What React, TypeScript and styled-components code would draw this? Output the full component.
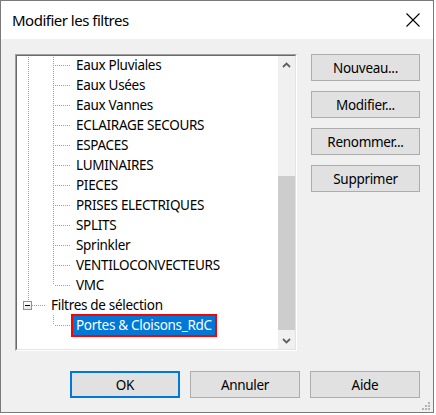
import React from "react";
import styled, { createGlobalStyle, css } from "styled-components";

const Global = createGlobalStyle`
  html, body { margin: 0; padding: 0; background: #ffffff; }
  body { font-family: "Noto Sans", "Liberation Sans", sans-serif; }
  * { box-sizing: border-box; }
`;

const FONT = `"Noto Sans", "Liberation Sans", sans-serif`;

const Window = styled.div`
  width: 434px;
  border: 1px solid #7a7a7a;
  background: #f0f0f0;
  position: relative;
  display: flex;
  flex-direction: column;
`;

const TitleBar = styled.div`
  height: 38px;
  background: #ffffff;
  display: flex;
  align-items: center;
  justify-content: space-between;
  padding: 0 10px 0 11px;
`;

const Title = styled.span`
  font-family: ${FONT};
  font-size: 15px;
  letter-spacing: -0.5px;
  color: #000;
`;

const CloseBox = styled.div`
  width: 20px;
  height: 20px;
  display: flex;
  align-items: center;
  justify-content: center;
`;

const Body = styled.div`
  display: flex;
  flex-direction: column;
  padding: 15px 13px 14px 14px;
`;

const TopRow = styled.div`
  display: flex;
  gap: 14px;
  align-items: flex-start;
`;

const ListOuter = styled.div`
  width: 282px;
  height: 297px;
  border: 1px solid;
  border-color: #a0a0a0 #ffffff #ffffff #a0a0a0;
  display: flex;
`;

const ListInner = styled.div`
  flex: 1;
  display: flex;
  border: 1px solid;
  border-color: #696969 #e3e3e3 #e3e3e3 #696969;
  background: #ffffff;
  overflow: hidden;
`;

const Tree = styled.div`
  flex: 1;
  display: flex;
  flex-direction: column;
  overflow: hidden;
  margin-top: -1px;
`;

const Row = styled.div`
  height: 20px;
  display: flex;
  align-items: center;
  flex: none;
`;

type VLine = "full" | "top" | "none";

const dottedV = css`
  background-image: repeating-linear-gradient(to bottom, #a0a0a0 0 1px, transparent 1px 2px);
`;
const dottedH = css`
  background-image: repeating-linear-gradient(to right, #a0a0a0 0 1px, transparent 1px 2px);
`;

const Guide = styled.div<{ $w: number; $v: VLine; $h: boolean }>`
  position: relative;
  width: ${(p) => p.$w}px;
  align-self: stretch;
  flex: none;
  display: flex;
  align-items: center;
  padding-left: 6px;
  &::before {
    content: "";
    position: absolute;
    left: 11px;
    top: 0;
    width: 1px;
    height: ${(p) => (p.$v === "full" ? "100%" : p.$v === "top" ? "50%" : "0")};
    ${dottedV}
  }
  &::after {
    content: "";
    display: ${(p) => (p.$h ? "block" : "none")};
    position: absolute;
    left: 13px;
    right: 1px;
    top: 50%;
    height: 1px;
    ${dottedH}
  }
`;

const Expander = styled.span`
  position: relative;
  z-index: 1;
  width: 9px;
  height: 9px;
  border: 1px solid #919191;
  background: linear-gradient(#ffffff, #e6e6e6);
  display: flex;
  align-items: center;
  justify-content: center;
  margin-top: 1px;
  &::before {
    content: "";
    width: 5px;
    height: 1px;
    background: #000;
  }
`;

const Label = styled.span<{ $selected?: boolean }>`
  height: 23px;
  display: flex;
  align-items: center;
  padding: 0 3px;
  border: 2px solid transparent;
  white-space: nowrap;
  font-family: ${FONT};
  font-size: 13.5px;
  letter-spacing: -0.3px;
  color: #000;
  ${(p) =>
    p.$selected &&
    css`
      background: #0078d7;
      color: #ffffff;
      border-color: #ff0000;
    `}
`;

const ScrollBar = styled.div`
  width: 17px;
  flex: none;
  background: #f0f0f0;
  display: flex;
  flex-direction: column;
`;

const ArrowButton = styled.div`
  height: 17px;
  flex: none;
  display: flex;
  align-items: center;
  justify-content: center;
`;

const Track = styled.div`
  flex: 1;
  display: flex;
  flex-direction: column;
  padding-top: 103px;
  padding-bottom: 2px;
`;

const Thumb = styled.div`
  flex: 1;
  background: #cdcdcd;
`;

const SideButtons = styled.div`
  display: flex;
  flex-direction: column;
  gap: 10px;
`;

const Button = styled.button<{ $default?: boolean; $wide?: boolean }>`
  width: ${(p) => (p.$wide ? 110 : 109)}px;
  height: 27px;
  padding: 0;
  background: #e1e1e1;
  border: 1px solid #adadad;
  font-family: ${FONT};
  font-size: 13.5px;
  letter-spacing: -0.3px;
  color: #000;
  ${(p) =>
    p.$default &&
    css`
      border: 2px solid #0078d7;
    `}
`;

const BottomRow = styled.div`
  display: flex;
  justify-content: flex-end;
  gap: 10px;
  margin-top: 20px;
`;

const Grip = styled.svg`
  position: absolute;
  right: 2px;
  bottom: 1px;
`;

type Item = { label: string; level: 0 | 1; v0: VLine; v1?: VLine; expander?: boolean; selected?: boolean };

const items: Item[] = [
  { label: "Eaux Pluviales", level: 1, v0: "full", v1: "full" },
  { label: "Eaux Usées", level: 1, v0: "full", v1: "full" },
  { label: "Eaux Vannes", level: 1, v0: "full", v1: "full" },
  { label: "ECLAIRAGE SECOURS", level: 1, v0: "full", v1: "full" },
  { label: "ESPACES", level: 1, v0: "full", v1: "full" },
  { label: "LUMINAIRES", level: 1, v0: "full", v1: "full" },
  { label: "PIECES", level: 1, v0: "full", v1: "full" },
  { label: "PRISES ELECTRIQUES", level: 1, v0: "full", v1: "full" },
  { label: "SPLITS", level: 1, v0: "full", v1: "full" },
  { label: "Sprinkler", level: 1, v0: "full", v1: "full" },
  { label: "VENTILOCONVECTEURS", level: 1, v0: "full", v1: "full" },
  { label: "VMC", level: 1, v0: "full", v1: "top" },
  { label: "Filtres de sélection", level: 0, v0: "top", expander: true },
  { label: "Portes & Cloisons_RdC", level: 1, v0: "none", v1: "top", selected: true },
];

const Chevron = ({ up }: { up?: boolean }) => (
  <svg width="9" height="6" viewBox="0 0 9 6">
    <path
      d={up ? "M1 5 L4.5 1.5 L8 5" : "M1 1 L4.5 4.5 L8 1"}
      fill="none"
      stroke="#606060"
      strokeWidth="1.8"
    />
  </svg>
);

export default function App() {
  return (
    <>
      <Global />
      <Window>
        <TitleBar>
          <Title>Modifier les filtres</Title>
          <CloseBox>
            <svg width="14" height="14" viewBox="0 0 14 14">
              <path d="M0.5 0.5 L13.5 13.5 M13.5 0.5 L0.5 13.5" stroke="#000" strokeWidth="1.1" />
            </svg>
          </CloseBox>
        </TitleBar>
        <Body>
          <TopRow>
            <ListOuter>
              <ListInner>
                <Tree>
                  {items.map((it) => (
                    <Row key={it.label}>
                      {it.level === 1 ? (
                        <>
                          <Guide $w={25} $v={it.v0} $h={false} />
                          <Guide $w={29} $v={it.v1 ?? "none"} $h={true} />
                        </>
                      ) : (
                        <Guide $w={29} $v={it.v0} $h={true}>
                          {it.expander && <Expander />}
                        </Guide>
                      )}
                      <Label $selected={it.selected}>{it.label}</Label>
                    </Row>
                  ))}
                </Tree>
                <ScrollBar>
                  <ArrowButton>
                    <Chevron up />
                  </ArrowButton>
                  <Track>
                    <Thumb />
                  </Track>
                  <ArrowButton>
                    <Chevron />
                  </ArrowButton>
                </ScrollBar>
              </ListInner>
            </ListOuter>
            <SideButtons>
              <Button>Nouveau...</Button>
              <Button>Modifier...</Button>
              <Button>Renommer...</Button>
              <Button>Supprimer</Button>
            </SideButtons>
          </TopRow>
          <BottomRow>
            <Button $wide $default>OK</Button>
            <Button $wide>Annuler</Button>
            <Button $wide>Aide</Button>
          </BottomRow>
        </Body>
        <Grip width="10" height="10" viewBox="0 0 10 10">
          {[
            [7, 1],
            [4, 4],
            [7, 4],
            [1, 7],
            [4, 7],
            [7, 7],
          ].map(([x, y]) => (
            <rect key={`${x}-${y}`} x={x} y={y} width="2" height="2" fill="#b4b4b4" />
          ))}
        </Grip>
      </Window>
    </>
  );
}
